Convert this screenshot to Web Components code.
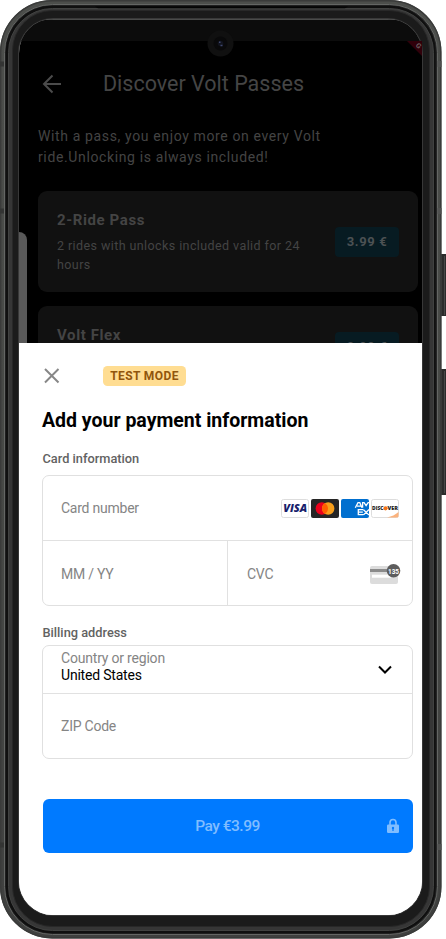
<!DOCTYPE html>
<html lang="en">
<head>
<meta charset="utf-8">
<title>Volt Passes</title>
<style>
html,body{margin:0;padding:0;background:#fff;overflow:hidden}
body{width:446px;height:939px;font-family:Roboto,"Liberation Sans",sans-serif}
</style>
</head>
<body>
<phone-frame>
  <pass-screen></pass-screen>
  <payment-sheet></payment-sheet>
</phone-frame>
<script>
const define=(name,html)=>customElements.define(name,class extends HTMLElement{
  constructor(){super();this.attachShadow({mode:'open'}).innerHTML=html;}
  connectedCallback(){
    for(const a of ['label','price']){
      const n=this.shadowRoot.querySelector('[data-'+a+']');
      if(n&&this.hasAttribute(a))n.textContent=this.getAttribute(a);
    }
  }
});

define('phone-frame',`<style>
:host{display:block;position:relative;width:446px;height:939px;box-sizing:border-box;padding:19px 24px 24px 19px}
.body{position:absolute;left:0;top:0}
.screen{position:relative;width:403px;height:896px;border-radius:34px;overflow:hidden;background:#fff;display:flex;flex-direction:column}
.camera{position:absolute;left:206px;top:29px}
.ribbon{position:absolute;left:406px;top:41px}
</style>
<svg class="body" width="446" height="939" viewBox="0 0 446 939">
<defs><linearGradient id="top" x1="0" x2="0" y1="0" y2="1"><stop offset="0" stop-color="#4c4e4b"/><stop offset=".5" stop-color="#464845"/><stop offset="1" stop-color="#3f403f"/></linearGradient></defs>
<path d="M441 254h5v62h-5zM441 369h5v126h-5z" fill="#2b2b2b"/><path d="M444.500 256v59M444.500 371v122" stroke="#484848"/>
<rect x="0" y="0" width="441.500" height="938.500" rx="52" fill="url(#top)"/>
<rect x=".7" y=".7" width="440" height="937" rx="51.500" fill="none" stroke="#3a3b3a" stroke-width="1.400"/>
<rect x="4.500" y="4.500" width="433" height="930" rx="48" fill="#252525" stroke="#646664"/>
<rect x="6.500" y="6.500" width="428.500" height="926" rx="46" fill="#111" stroke="#101010" stroke-width="1.500"/>
<rect x="8.500" y="8.500" width="425" height="922" rx="44" fill="#363636" stroke="#414241"/>
<rect x="12.500" y="10.500" width="417" height="916" rx="40" fill="#1b1b1b" stroke="#282828"/>
<path d="M95 6.500h253l-3 1.700H98z" fill="#050505"/>
<path d="M0 64h4M0 211h4M0 845h4" stroke="#333433" stroke-width="5"/>
<path d="M437.500 64h4M437.500 211h4M437.500 847h4" stroke="#505150" stroke-width="6"/>
<rect x="18.500" y="18.500" width="404" height="897" rx="34.500" fill="none" stroke="#383838"/>
<path d="M53 19.500h336" stroke="#555755"/>
</svg>
<div class="screen"><slot></slot></div>
<svg class="ribbon" width="16" height="17"><path d="M1 0h15v15z" fill="#30000a"/><text transform="translate(9.200 4.800) rotate(45)" font-family="Roboto" font-size="7" font-weight="700" fill="#6b6063">G</text></svg>
<svg class="camera" width="28" height="28"><circle cx="14.500" cy="14.500" r="13" fill="#101010"/><circle cx="14.500" cy="14.500" r="7" fill="#09090a"/><circle cx="14.500" cy="14.500" r="2.800" fill="#11131d"/><path d="M13 13.200h1.500M14.500 16.500h2" stroke="#3f4870" stroke-width="1.500"/></svg>`);

define('pass-screen',`<style>
:host{display:block;flex:0 0 324px;height:324px;overflow:hidden;background:#000;color:#444;position:relative;border-top:1px solid #4a4b4a;box-sizing:border-box}
.status{height:21px;background:#0c0c0c}
header{display:flex;align-items:center;height:86px;padding-left:23px;box-sizing:border-box}
header svg{flex:none;margin-right:41px}
header span{font-size:21.500px;white-space:nowrap;color:#454545;margin-top:-1px}
p{margin:-1px 0 23px 19px;font-size:14px;line-height:21px;letter-spacing:.63px;white-space:nowrap}
.list{display:flex;flex-direction:column;gap:14px;padding:0 4px 0 19px}
.short{height:82px}
.handle{position:absolute;left:0;top:212px;width:8px;height:130px;background:#595959;border-radius:0 10px 0 0}
</style>
<div class="status"></div>
<header><svg width="20" height="20" fill="none" stroke="#4b4b4b" stroke-width="2"><path d="M19 10H2.500M10.500 1.500 2 10l8.500 8.500"/></svg><span>Discover Volt Passes</span></header>
<p>With a pass, you enjoy more on every Volt<br>ride.Unlocking is always included!</p>
<div class="list"><pass-card label="2-Ride Pass" price="3.99 €">2 rides with unlocks included valid for 24<br>hours</pass-card><pass-card class="short" label="Volt Flex" price="9.99 €"></pass-card></div>
<div class="handle"></div>`);

define('pass-card',`<style>
:host{display:flex;box-sizing:border-box;height:101px;border-radius:9px;background:#111;padding:0 19px;align-items:center;justify-content:space-between}
b{display:block;font-size:15px;font-weight:700;line-height:20px;letter-spacing:.6px;color:#444;margin-bottom:6px}
div{min-height:19px;font-size:12.500px;line-height:19px;letter-spacing:.41px;white-space:nowrap;color:#444}
button{all:unset;box-sizing:border-box;flex:none;width:64px;height:30px;border-radius:4px;background:#071b22;color:#4c5153;text-align:center;font-size:13px;line-height:30px;font-weight:700;letter-spacing:.65px}
</style><section><b data-label></b><div><slot></slot></div></section><button data-price></button>`);

define('payment-sheet',`<style>
:host{display:flex;flex-direction:column;flex:1;background:#fff;padding:0 10px 0 24px;position:relative;border-radius:7px 0 0 0}
.top{display:flex;align-items:center;height:65px}
.top svg{margin:-1px 43px 0 0}
.tag{box-sizing:border-box;width:83px;height:20px;border-radius:4.500px;background:#ffdd92;color:#91560d;font-size:12px;font-weight:700;line-height:20px;letter-spacing:.4px;text-align:center;white-space:nowrap}
h1{margin:0 0 0 -1px;padding-top:1px;font-size:19.500px;line-height:24px;font-weight:700;color:#000;letter-spacing:-.01px;white-space:nowrap}
h2{margin:0;font-size:12.800px;line-height:16px;font-weight:500;color:#626262}
.info{margin:18px 0 8px -.5px}.addr{margin:19px 0 4px -.5px}
pay-button{margin-top:40px}
.pair{display:flex;border-top:1px solid #e1e1e1}
.number,.date,.cvc,.zip{height:64px}
.date,.cvc{padding-top:2px}
.date{width:184px}
.cvc{flex:1;border-left:1px solid #e1e1e1;padding-left:19px}
</style>
<div class="top"><svg width="17" height="17" stroke="#878787" stroke-width="2"><path d="M2 2l13.500 13.500M15.500 2 2 15.500"/></svg><span class="tag">TEST MODE</span></div>
<h1>Add your payment information</h1>
<h2 class="info">Card information</h2>
<field-group><form-field class="number" label="Card number"><card-brands></card-brands></form-field>
<div class="pair"><form-field class="date" label="MM / YY"></form-field><form-field class="cvc" label="CVC"><cvc-icon></cvc-icon></form-field></div></field-group>
<h2 class="addr">Billing address</h2>
<field-group><country-field></country-field><form-field class="zip" label="ZIP Code"></form-field></field-group>
<pay-button></pay-button>`);

define('field-group',`<style>:host{display:block;box-sizing:border-box;width:371px;margin-left:-1px;border:1px solid #e0e0e0;border-radius:7px;background:#fff}</style><slot></slot>`);
define('form-field',`<style>:host{display:flex;box-sizing:border-box;align-items:center;justify-content:space-between;padding:0 13px 0 18px;font-size:14px;letter-spacing:-.24px;color:#858585;white-space:nowrap}</style><span data-label></span><slot></slot>`);
define('country-field',`<style>:host{display:flex;box-sizing:border-box;height:48px;align-items:center;justify-content:space-between;padding:0 19px 0 18px;border-bottom:1px solid #e1e1e1;font-size:14px;line-height:17px;letter-spacing:-.2px;color:#858585;white-space:nowrap}
b{display:block;font-weight:400;color:#000}i{font-style:normal;display:block}div{margin-top:-6px}</style>
<div><i>Country or region</i><b>United States</b></div><svg width="16" height="12" fill="none" stroke="#000" stroke-width="2"><path d="M2 2.500l6 6 6-6"/></svg>`);

define('card-brands',`<style>:host{display:flex;gap:2px}svg{display:block}text{font-family:"Open Sans",sans-serif;font-weight:800;letter-spacing:0}</style>
<svg width="28" height="19"><rect x=".5" y=".5" width="27" height="18" rx="2" fill="#fff" stroke="#ddd"/><text x="2.200" y="13.300" font-size="10" font-style="italic" fill="#171e6c" textLength="24" lengthAdjust="spacingAndGlyphs">VISA</text></svg>
<svg width="28" height="19"><rect width="28" height="19" rx="2" fill="#252525"/><circle cx="10.800" cy="9.500" r="6.200" fill="#eb001b"/><circle cx="17.200" cy="9.500" r="6.200" fill="#f79e1b"/><path d="M14 4.200a6.200 6.200 0 0 1 0 10.600a6.200 6.200 0 0 1 0-10.600" fill="#ff5f00"/></svg>
<svg width="28" height="19"><rect width="28" height="19" rx="2" fill="#006fcf"/><g fill="none" stroke="#fff" stroke-width="1.300"><path d="M14.300 8.800 17 3.700h1.800l2.200 5.100M16 7.200h4M21.600 8.800V3.700h1.500l2 3 2-3H28M22.300 10.700h-5v5h5M17.300 13.200h4.500M22.500 10.700l5.500 5.400M22.500 15.900l5.500-5.400"/></g></svg>
<svg width="28" height="19"><rect x=".5" y=".5" width="27" height="18" rx="2" fill="#fff" stroke="#ddd"/><path d="M27.500 13v4q0 1.500-1.500 1.500H16q7-1.500 11.500-5.500" fill="#fbb27c"/><circle cx="14.500" cy="9.300" r="2.100" fill="#f47216"/><text x="1" y="11.300" font-size="5" fill="#222" textLength="11.500" lengthAdjust="spacingAndGlyphs">DISC</text><text x="16.500" y="11.300" font-size="5" fill="#222" textLength="10.500" lengthAdjust="spacingAndGlyphs">VER</text></svg>`);

define('cvc-icon',`<style>:host{display:block;margin:-1px -2px 0 0}svg{display:block}text{letter-spacing:0}</style><svg width="31" height="22"><rect x="0" y="3" width="28" height="18" rx="2" fill="#dcdcdc"/><path d="M0 6h28v3H0z" fill="#8b8b8b"/><path d="M2 11.700h19v3H2z" fill="#fff"/><circle cx="23.500" cy="7.800" r="6.800" fill="#5d5d5d"/><text x="18" y="10.500" font-family="Roboto" font-size="8" font-weight="700" fill="#fff" textLength="11" lengthAdjust="spacingAndGlyphs">135</text></svg>`);

define('pay-button',`<style>:host{display:flex;align-items:center;box-sizing:border-box;width:370px;height:54px;border-radius:6px;background:#007aff;color:#80bdff;padding:0 13px 0 37px}
span{flex:1;text-align:center;font-size:15.500px;line-height:20px;letter-spacing:-.5px;font-weight:500;margin:-1px 0 0 -11px}</style><span>Pay €3.99</span><svg width="14" height="16"><path d="M4 7V4.500a3 3 0 0 1 6 0V7" fill="none" stroke="#80bdff" stroke-width="1.600"/><rect x="1" y="6.500" width="12" height="8.500" rx="1.300" fill="#80bdff"/><circle cx="7" cy="10" r="1.200" fill="#007aff"/><path d="M7 10v3" stroke="#007aff" stroke-width="1.200"/></svg>`);
</script>
</body>
</html>
